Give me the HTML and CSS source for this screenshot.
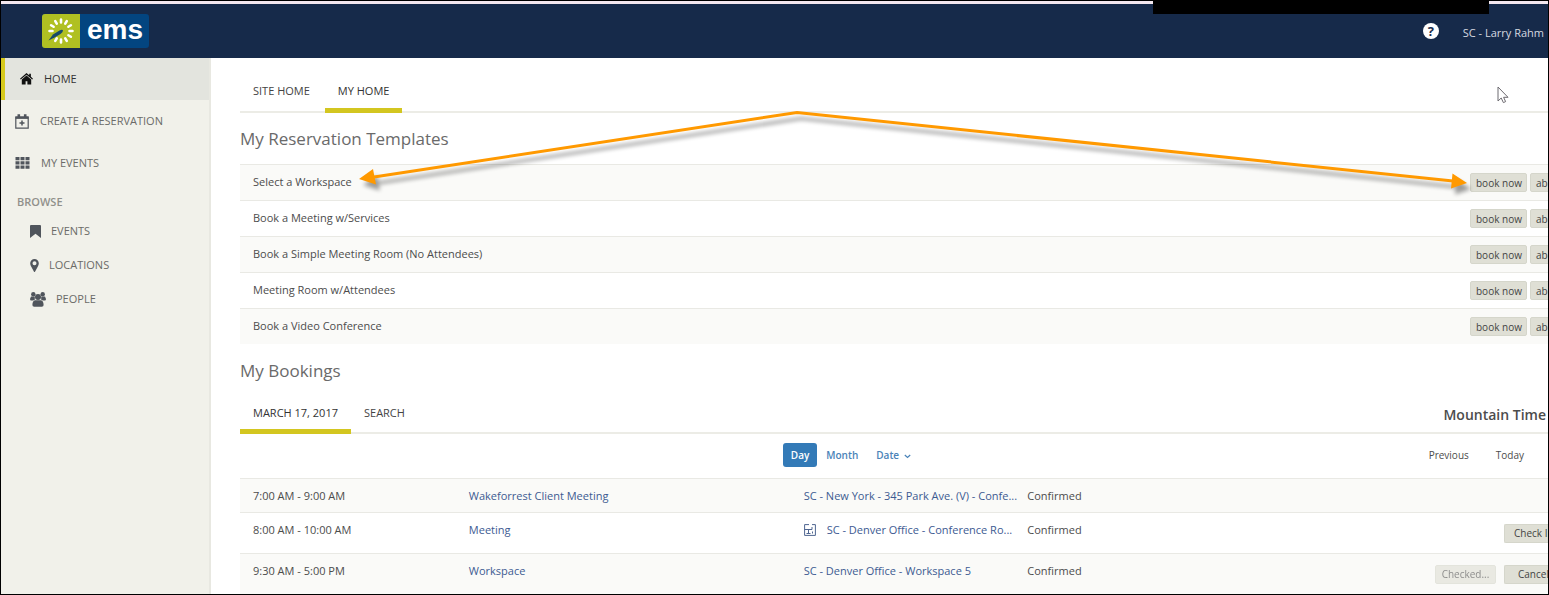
FILE: index.html
```html
<!DOCTYPE html>
<html lang="en">
<head>
<meta charset="utf-8">
<title>EMS - My Home</title>
<link rel="stylesheet" href="styles.css">
</head>
<body>
<div class="frame">
  <header class="topbar">
    <a class="logo" href="#" aria-label="ems">
      <svg class="logo-mark" viewBox="0 0 38 34" aria-hidden="true">
        <path stroke="#fff" stroke-width="2.600" stroke-linecap="round" d="M19 8.500v-3M19 25.500v3M27.500 17h3M10.500 17h-3M26.400 12.750l2.500-1.500M26.400 21.250l2.500 1.500M11.600 12.750l-2.500-1.500M23.250 9.600l1.500-2.500M14.750 9.600l-1.500-2.500M23.250 24.400l1.500 2.500M14.750 24.400l-1.500 2.500"/>
        <path d="M6.500 26.500L11 20.500L17.500 16.500Q20.500 14.800 21 16.500Q21 18 18.500 20L13 23.200z" fill="#16496b"/>
      </svg>
      <span class="logo-text">ems</span>
    </a>
    <div class="account">
      <a class="help" href="#" aria-label="Help">?</a>
      <a class="user" href="#">SC - Larry Rahm</a>
    </div>
    <div class="redaction"></div>
  </header>
  <div class="body">
    <nav class="sidebar">
      <a class="nav-item active" href="#">
        <svg width="13" height="12" viewBox="0 0 13 12" fill="#111"><path d="M6.500 0L0 5.700l.8.900L6.500 1.800l5.700 4.800.8-.9-2.100-1.900V.8H9.200v1.500z"/><path d="M6.500 2.500L1.800 6.500v5h3.800V8.300h1.800v3.200h3.800v-5z"/></svg>
        HOME</a>
      <a class="nav-item" href="#">
        <svg width="14" height="15" viewBox="0 0 14 15" fill="none" stroke="#50555c"><path d="M.8 3h12.400v11.200H.8z" stroke-width="1.200"/><path d="M.5 3.700h13" stroke-width="2.400"/><path d="M3.800.3v3M10.200.3v3" stroke-width="2.600"/><path d="M7 6.500v5M4.500 9h5" stroke-width="1.500"/></svg>
        CREATE A RESERVATION</a>
      <a class="nav-item" href="#">
        <svg width="15" height="12" viewBox="0 0 14 12" fill="#50555c"><path d="M0 0h4v3.200H0zM5 0h4v3.200H5zM10 0h4v3.200h-4zM0 4.300h4v3.200H0zM5 4.300h4v3.200H5zM10 4.300h4v3.200h-4zM0 8.600h4v3.200H0zM5 8.600h4v3.200H5zM10 8.600h4v3.200h-4z"/></svg>
        MY EVENTS</a>
      <div class="nav-title">BROWSE</div>
      <a class="nav-item sub" href="#">
        <svg width="11" height="13" viewBox="0 0 11 13" fill="#50555c"><path d="M1 0h9q1 0 1 1v12L5.500 8.800 0 13V1q0-1 1-1z"/></svg>
        EVENTS</a>
      <a class="nav-item sub" href="#">
        <svg width="9" height="13" viewBox="0 0 9 13" fill="#50555c" fill-rule="evenodd"><path d="M4.500 0A4.300 4.300 0 0 0 .2 4.300c0 1.500.5 2.300 1.100 3.500L4 12.700q.5.600 1 0l2.700-4.900c.6-1.200 1.100-2 1.100-3.500A4.300 4.300 0 0 0 4.500 0zm0 2.300a2 2 0 1 1 0 4 2 2 0 0 1 0-4z"/></svg>
        LOCATIONS</a>
      <a class="nav-item sub" href="#">
        <svg width="16" height="15" viewBox="0 0 16 15" fill="#50555c"><circle cx="3.300" cy="2.300" r="2.200"/><circle cx="12.700" cy="2.300" r="2.200"/><circle cx="8" cy="5" r="3"/><path d="M1 4.500h3.800v3.200L3 8.500H1.200Q0 8.500 0 7zM15 4.500h-3.800v3.200l1.800.8h1.800Q16 8.500 16 7zM5 8.200h6q2.600.8 2.600 4.800 0 1.800-1.800 1.800H4.200Q2.400 14.800 2.400 13q0-4 2.600-4.800z"/></svg>
        PEOPLE</a>
    </nav>
    <main class="main">
      <div class="tabs home-tabs">
        <a class="tab" href="#">SITE HOME</a>
        <a class="tab current" href="#">MY HOME</a>
      </div>
      <h2 class="heading">My Reservation Templates</h2>
      <ul class="templates">
        <li><a href="#">Select a Workspace</a><span class="actions"><button>book now</button><button>about</button></span></li>
        <li><a href="#">Book a Meeting w/Services</a><span class="actions"><button>book now</button><button>about</button></span></li>
        <li><a href="#">Book a Simple Meeting Room (No Attendees)</a><span class="actions"><button>book now</button><button>about</button></span></li>
        <li><a href="#">Meeting Room w/Attendees</a><span class="actions"><button>book now</button><button>about</button></span></li>
        <li><a href="#">Book a Video Conference</a><span class="actions"><button>book now</button><button>about</button></span></li>
      </ul>
      <h2 class="heading bookings-heading">My Bookings</h2>
      <div class="tabs booking-tabs">
        <a class="tab current" href="#">MARCH 17, 2017</a>
        <a class="tab" href="#">SEARCH</a>
        <strong class="zone">Mountain Time</strong>
      </div>
      <div class="toolbar">
        <div class="views">
          <button class="view selected">Day</button>
          <button class="view">Month</button>
          <button class="view">Date
            <svg width="7" height="5" viewBox="0 0 7 5" fill="none" stroke="#4a83b8" stroke-width="1.200"><path d="M.8 1l2.700 2.500L6.200 1"/></svg></button>
        </div>
        <div class="paging"><button>Previous</button><button>Today</button></div>
      </div>
      <table class="bookings">
        <colgroup><col class="c-time"><col class="c-title"><col class="c-place"><col class="c-status"><col class="c-actions"></colgroup>
        <tr><td>7:00 AM - 9:00 AM</td><td><a href="#">Wakeforrest Client Meeting</a></td><td><a href="#">SC - New York - 345 Park Ave. (V) - Confe...</a></td><td>Confirmed</td><td></td></tr>
        <tr class="tall"><td>8:00 AM - 10:00 AM</td><td><a href="#">Meeting</a></td><td><a class="with-plan" href="#"><svg width="12" height="12" viewBox="0 0 12 12" fill="none" stroke="#4e6590"><path d="M5 .6H.6v10.800h10.800V.6H8M.6 5.500H8M4.500 5.500v4M8 3v2.500M2.500 9.500h4M8.500 7.500v2"/></svg>SC - Denver Office - Conference Ro...</a></td><td>Confirmed</td><td><span class="row-actions"><button>Check In</button></span></td></tr>
        <tr class="tall"><td>9:30 AM - 5:00 PM</td><td><a href="#">Workspace</a></td><td><a href="#">SC - Denver Office - Workspace 5</a></td><td>Confirmed</td><td><span class="row-actions"><button disabled>Checked...</button><button class="cancel">Cancel</button></span></td></tr>
      </table>
    </main>
  </div>
  <svg class="callout" width="1549" height="240" viewBox="0 0 1549 240" aria-hidden="true">
    <defs>
      <filter id="soft" x="-5%" y="-30%" width="110%" height="160%"><feGaussianBlur stdDeviation="2"/></filter>
      <g id="arrows">
        <path d="M374 177L797 112.500L1453 181" fill="none" stroke-width="3"/>
        <path d="M359 179L373 169L376 184.500zM1467 183L1452.500 173.500L1451 188.500z" stroke="none"/>
      </g>
    </defs>
    <use href="#arrows" x="4" y="6" stroke="#000" fill="#000" opacity=".38" filter="url(#soft)"/>
    <use href="#arrows" stroke="#ff9900" fill="#ff9900"/>
  </svg>
  <svg class="pointer" width="12" height="18" viewBox="0 0 12 18" fill="#fff" stroke="#6d6a70" aria-hidden="true"><path d="M1 1v14l3.200-3 2.200 4.600 2.200-1-2-4.300H11z"/></svg>
</div>
</body>
</html>
```

FILE: styles.css
```css
* { box-sizing: border-box; }
body {
  margin: 0;
  font-family: "Open Sans", "Noto Sans", sans-serif;
  font-size: 11px;
  line-height: 16px;
  color: #4c4c4c;
  background: #fff;
}
a { color: inherit; text-decoration: none; }
button { font: inherit; font-size: 10px; color: inherit; white-space: nowrap; }

.frame {
  position: relative;
  display: flex;
  flex-direction: column;
  height: 100vh;
  overflow: hidden;
  border: 1px solid #000;
}

.topbar {
  position: relative;
  flex: none;
  display: flex;
  justify-content: space-between;
  height: 57px;
  border-top: 3px solid #f3e8f0;
  background: #162a4a;
}
.logo {
  display: flex;
  height: 34px;
  margin: 10px 0 0 41px;
  border-radius: 3px;
  overflow: hidden;
  background: #034580;
}
.logo-mark { width: 38px; height: 34px; background: #b0c022; }
.logo-text {
  padding: 0 6px 0 7px;
  font: bold 28px/31px "Liberation Sans", Arial, sans-serif;
  color: #fff;
}
.account {
  display: flex;
  align-items: center;
  gap: 24px;
  padding-right: 4px;
  color: #d5d9e0;
}
.user { padding-top: 4px; }
.help {
  width: 16px;
  height: 16px;
  border-radius: 50%;
  background: #fff;
  color: #162a4a;
  font-weight: 700;
  font-size: 13px;
  text-align: center;
}
.redaction {
  position: absolute;
  top: -4px;
  right: 59px;
  width: 336px;
  height: 14px;
  background: #000;
}

.body { flex: 1; display: flex; min-height: 0; }
.sidebar {
  flex: none;
  width: 210px;
  border-right: 2px solid #e8e8e1;
  background: #f1f1ea;
  color: #6b6b68;
}
.nav-item {
  display: flex;
  align-items: center;
  gap: 11px;
  height: 42px;
  padding-left: 14px;
}
.nav-item.active {
  padding-left: 15px;
  border-left: 4px solid #d6c91d;
  background: #e3e4de;
  color: #333;
}
.nav-item.sub { height: 34px; gap: 10px; padding-left: 29px; }
.nav-title { padding: 10px 0 4px 16px; color: #90908a; font-weight: 600; }

.main { flex: 1; min-width: 0; padding-left: 29px; overflow: hidden; }
.tabs { display: flex; border-bottom: 2px solid #ecece6; }
.tab {
  margin-bottom: -2px;
  padding: 0 13px;
  color: #444;
}
.tab.current { border-bottom: 5px solid #d3c620; color: #333; }
.home-tabs { gap: 2px; padding-top: 25px; height: 55px; }
.home-tabs .tab { height: 30px; }
.heading {
  margin: 0;
  padding: 14px 0 13px;
  font-size: 17px;
  font-weight: 400;
  line-height: 24px;
  color: #6a6a6a;
}

.templates { margin: 0; padding: 0; list-style: none; }
.templates li {
  display: flex;
  justify-content: space-between;
  align-items: center;
  height: 36px;
  padding-left: 13px;
  border-top: 1px solid #e9e9e4;
}
.templates li > a { padding-bottom: 2px; }
.templates li:nth-child(odd) { background: #fafaf8; }
.actions { display: flex; gap: 3px; width: 78px; overflow: hidden; }
.actions button, .row-actions button {
  flex: none;
  height: 19px;
  padding: 0 5px;
  border: 1px solid #d5d6cb;
  border-radius: 2px;
  background: #dfdfd5;
  color: #444;
  line-height: 16px;
}
.actions button:first-child { width: 57px; }

.bookings-heading { padding: 15px 0 17px; }
.booking-tabs { height: 34px; }
.booking-tabs .tab { height: 34px; padding-top: 5px; }
.zone {
  margin-left: auto;
  padding: 5px 2px 0 0;
  font-size: 14px;
  font-weight: 600;
  line-height: 20px;
}
.toolbar {
  display: flex;
  justify-content: space-between;
  align-items: center;
  height: 44px;
  padding: 0 24px 3px 41.5%;
}
.views, .paging { display: flex; align-items: center; }
.paging { gap: 27px; }
.paging button, .view {
  padding: 0;
  border: 0;
  background: none;
}
.view {
  height: 24px;
  padding: 0 9px;
  border-radius: 3px;
  color: #4a83b8;
  font-weight: 600;
}
.view svg { margin-left: 2px; }
.view.selected { padding: 0 8px; background: #337ab7; color: #fff; }

.bookings {
  width: 100%;
  table-layout: fixed;
  border-collapse: collapse;
  color: #4c4c4c;
}
.c-time { width: 16.5%; }
.c-title { width: 25.6%; }
.c-place { width: 17.1%; }
.c-status { width: 16%; }
.bookings td {
  height: 34px;
  padding: 0 0 0 13px;
  border-top: 1px solid #e9e9e4;
  white-space: nowrap;
}
.bookings .tall td { height: 41px; padding-bottom: 6px; }
.bookings .tall td:last-child { padding: 0; }
.bookings a { color: #3d5a92; }
.bookings tr:nth-child(odd) { background: #fafaf8; }
.with-plan { display: flex; align-items: center; gap: 11px; }
.row-actions { display: flex; justify-content: flex-end; gap: 8px; }
.row-actions button { width: 61px; }
.row-actions button:last-child {
  width: 44px;
  padding-left: 9px;
  border-right: 0;
  border-radius: 2px 0 0 2px;
  overflow: hidden;
  text-align: left;
}
.row-actions .cancel:last-child { padding-left: 13px; }
.row-actions button:disabled { opacity: .6; }

.callout, .pointer { position: absolute; pointer-events: none; }
.callout { top: -1px; left: -1px; }
.pointer { top: 85px; right: 39px; }
```
